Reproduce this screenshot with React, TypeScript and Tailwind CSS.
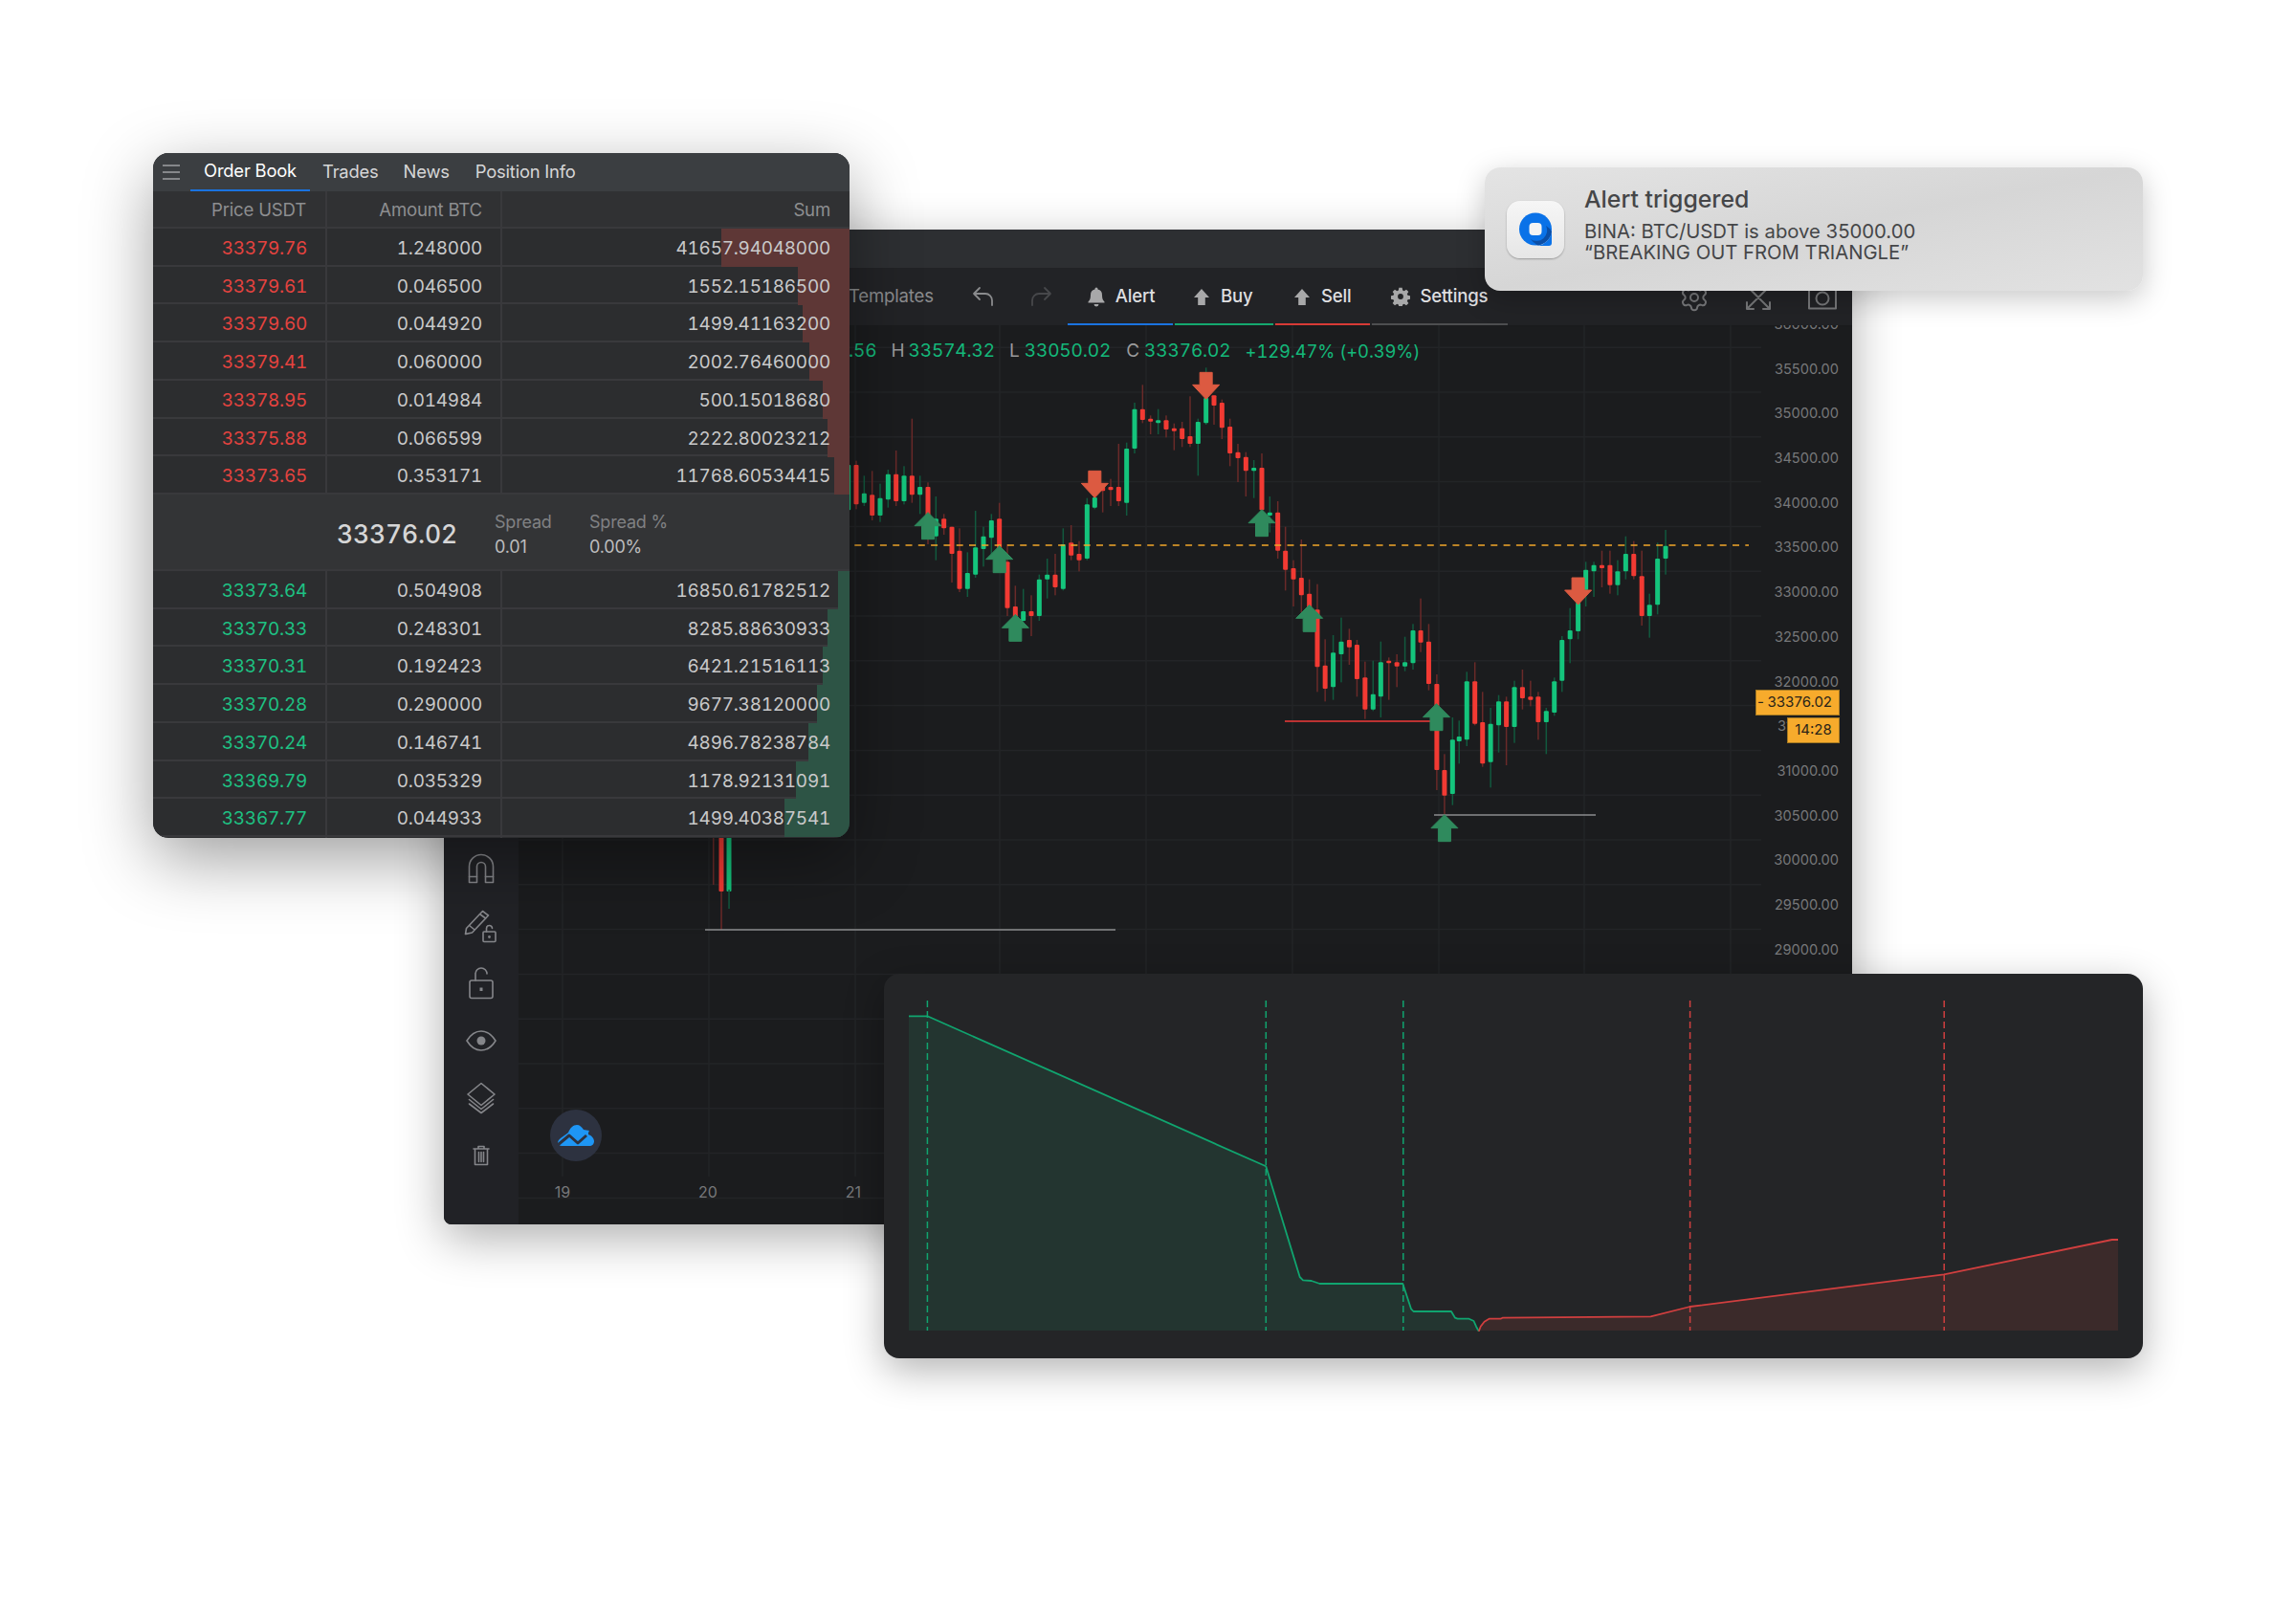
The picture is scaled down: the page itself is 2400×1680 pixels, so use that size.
import React from "react";
import { Settings } from "lucide-react";

type C = [number, "R" | "G", number, number, number, number];
// x (crop 1), colour, wick top, body top, body bottom, wick bottom
const A: C[] = [
  [20,"G",335,348,490,500],[45,"R",335,348,472,487],[70,"G",382,437,467,477],[95,"R",367,442,507,522],[120,"G",407,452,507,527],
  [145,"G",363,377,457,482],[170,"R",303,377,462,477],[195,"G",352,382,462,472],[220,"R",203,382,442,467],[245,"G",382,417,442,502],
  [270,"R",403,417,507,597],[295,"G",447,517,572,647],[320,"R",502,517,547,567],[345,"R",542,542,627,717],[369,"R",547,617,737,747],
  [394,"G",622,687,737,762],[419,"G",492,607,692,702],[444,"G",542,572,612,667],[469,"G",502,522,577,627],[494,"R",467,517,650,650],
  [519,"R",597,652,797,822],[544,"R",727,792,830,830],[569,"G",737,807,837,850],[594,"R",757,807,822,885],[619,"G",692,707,822,837],
  [644,"G",642,692,707,767],[669,"R",627,692,732,757],[694,"G",547,597,737,742],[719,"R",537,592,632,647],[744,"R",587,627,647,682],
  [769,"G",452,472,642,647],[793,"G",450,450,482,487],[818,"R",407,410,430,497],[843,"R",392,417,427,477],[868,"R",282,417,462,477],
  [893,"G",278,297,467,507],[918,"G",153,173,297,312],[943,"R",97,173,207,217],[968,"R",193,203,212,252],[992,"G",173,208,217,252],
  [1017,"R",193,208,237,262],[1042,"R",218,233,242,302],[1067,"R",213,233,267,292],[1092,"R",133,258,282,292],[1117,"G",203,213,282,382],
  [1142,"G",43,138,217,222],[1167,"R",130,130,162,222],[1192,"R",143,153,232,267],[1217,"R",203,228,312,352],[1242,"R",282,308,327,402],
  [1267,"R",308,323,367,447],[1292,"G",333,357,367,452],[1317,"R",312,357,490,500],[1342,"G",447,497,507,560],[1367,"R",462,497,617,642],
  [1391,"R",542,617,677,742],[1416,"R",647,672,707,792],[1441,"R",582,702,757,812],[1466,"R",707,752,800,800],[1491,"R",722,802,982,1060],
];
const B: C[] = [
  [118,"R",895,977,1050,1090],[140,"G",882,937,1045,1085],[162,"G",827,902,942,1030],[184,"R",862,897,920,975],[205,"R",897,912,1020,1075],
  [227,"R",965,1015,1115,1145],[249,"G",962,1067,1115,1120],[270,"G",902,967,1075,1140],[292,"R",952,962,970,1085],[314,"R",942,967,980,1045],
  [336,"G",887,967,980,995],[358,"G",847,867,970,990],[379,"R",767,867,905,935],[401,"R",847,902,1035,1055],[423,"R",1005,1035,1305,1368],
  [444,"R",1255,1305,1385,1445],[466,"G",1140,1210,1380,1415],[484,"G",1150,1200,1215,1285],[505,"G",997,1027,1210,1230],[527,"R",967,1027,1160,1165],
  [548,"R",1060,1155,1285,1295],[570,"G",1110,1160,1280,1360],[592,"G",1070,1090,1165,1250],[613,"R",1075,1090,1170,1290],[635,"G",1025,1045,1170,1220],
  [657,"R",990,1045,1080,1115],[679,"R",1025,1075,1085,1105],[700,"R",1060,1075,1155,1210],[722,"G",1110,1120,1155,1255],[744,"G",1015,1027,1125,1135],
  [765,"G",885,897,1025,1060],[787,"G",797,867,895,970],[809,"G",780,780,870,895],[830,"G",652,677,740,792],[852,"G",652,662,682,762],
  [874,"R",617,662,672,732],[896,"R",617,662,725,752],[917,"G",647,682,725,757],[939,"G",572,627,682,707],[961,"R",587,627,697,707],
  [983,"R",617,697,822,852],[1004,"G",752,787,822,890],[1026,"G",592,642,787,817],[1048,"G",552,602,642,692],
];
const ax = (v: number) => 880 + v / 3;
const bx = (v: number) => 1340 + v / 2.613;
const ay = (v: number) => 370 + v / 3;

const candles = [...A.map((c) => ({ x: ax(c[0]), c })), ...B.map((c) => ({ x: bx(c[0]), c }))];

const ups = [[ax(270), 497], [ax(494), 602], [ax(544), 817], [ax(1317), 488], [ax(1466), 787], [bx(422), 1097], [bx(444), 1445]];
const downs = [[ax(793), 367], [ax(1142), 58], [bx(809), 702]];

const asks = [
  ["33379.76", "1.248000", "41657.94048000", 134],
  ["33379.61", "0.046500", "1552.15186500", 54],
  ["33379.60", "0.044920", "1499.41163200", 49],
  ["33379.41", "0.060000", "2002.76460000", 42],
  ["33378.95", "0.014984", "500.15018680", 28],
  ["33375.88", "0.066599", "2222.80023212", 23],
  ["33373.65", "0.353171", "11768.60534415", 16],
] as const;
const bids = [
  ["33373.64", "0.504908", "16850.61782512", 12],
  ["33370.33", "0.248301", "8285.88630933", 23],
  ["33370.31", "0.192423", "6421.21516113", 28],
  ["33370.28", "0.290000", "9677.38120000", 34],
  ["33370.24", "0.146741", "4896.78238784", 43],
  ["33369.79", "0.035329", "1178.92131091", 56],
  ["33367.77", "0.044933", "1499.40387541", 68],
] as const;

const prices = ["36000.00","35500.00","35000.00","34500.00","34000.00","33500.00","33000.00","32500.00","32000.00","31500.00","31000.00","30500.00","30000.00","29500.00","29000.00"];

function Row({ r, ask }: { r: readonly [string, string, string, number]; ask: boolean }) {
  return (
    <div className="grid h-[39.72px] grid-cols-[182px_183px_1fr] items-stretch border-b-[2px] border-[#39393c] bg-[#2c2d2f] text-[18.9px] leading-[41px] tracking-[-0.2px] text-[#c9c9ca] tabular-nums">
      <div className={`border-r-[2px] border-[#39393c] pr-[19px] text-right ${ask ? "text-[#e5433f]" : "text-[#1ec183]"}`}>{r[0]}</div>
      <div className="border-r-[2px] border-[#39393c] pr-[19px] text-right">{r[1]}</div>
      <div className="relative pr-[20px] text-right">
        <div className={`absolute top-0 right-0 h-[40px] ${ask ? "bg-[#5e3736]" : "bg-[#2d5445]"}`} style={{ width: r[3] }} />
        <span className="relative">{r[2]}</span>
      </div>
    </div>
  );
}

function OrderBook() {
  return (
    <div className="absolute top-[160px] left-[160px] z-20 flex h-[716px] w-[728px] flex-col overflow-hidden rounded-[16px] bg-[#2c2d2f] shadow-[0_22px_70px_rgba(0,0,0,0.38)]">
      <div className="flex h-[40px] items-center bg-[#3b3e41] text-[18.4px] tracking-[-0.2px] text-[#d6d6d7]">
        <div className="ml-[10px] flex w-[18px] flex-col gap-[5px]">
          <div className="h-[2px] bg-[#85878a]" />
          <div className="h-[2px] bg-[#85878a]" />
          <div className="h-[2px] bg-[#85878a]" />
        </div>
        <div className="ml-[11px] flex h-full w-[125px] items-center justify-center border-b-[2px] border-[#1a73e0] text-white">Order Book</div>
        <div className="ml-[13px]">Trades</div>
        <div className="ml-[26px]">News</div>
        <div className="ml-[27px]">Position Info</div>
      </div>
      <div className="grid h-[39px] grid-cols-[182px_183px_1fr] border-b-[2px] border-[#39393c] bg-[#303133] text-[18.6px] leading-[39px] tracking-[-0.2px] text-[#8d8e90]">
        <div className="border-r-[2px] border-[#39393c] pr-[20px] text-right">Price USDT</div>
        <div className="border-r-[2px] border-[#39393c] pr-[19px] text-right">Amount BTC</div>
        <div className="pr-[20px] text-right">Sum</div>
      </div>
      {asks.map((r) => <Row key={r[0]} r={r} ask />)}
      <div className="flex h-[80px] items-center border-b-[2px] border-[#39393c] bg-[#333436] pt-[5px]">
        <div className="ml-[192px] w-[165px] text-[26.4px] font-medium tracking-[-0.1px] text-[#d6d6d7] tabular-nums">33376.02</div>
        <div className="w-[99px] text-[18px] leading-[26px] tracking-[-0.2px]">
          <div className="text-[#808183]">Spread</div>
          <div className="text-[#bdbdbe]">0.01</div>
        </div>
        <div className="text-[18px] leading-[26px] tracking-[-0.2px]">
          <div className="text-[#808183]">Spread %</div>
          <div className="text-[#bdbdbe]">0.00%</div>
        </div>
      </div>
      {bids.map((r) => <Row key={r[0]} r={r} ask={false} />)}
    </div>
  );
}

function Arrow({ x, y, up }: { x: number; y: number; up: boolean }) {
  const fill = up ? "#2f8a5d" : "#dc5a41";
  const pts = up
    ? `${x},${y} ${x + 14},${y + 14} ${x + 6.5},${y + 14} ${x + 6.5},${y + 28} ${x - 6.5},${y + 28} ${x - 6.5},${y + 14} ${x - 14},${y + 14}`
    : `${x - 6.5},${y} ${x + 6.5},${y} ${x + 6.5},${y + 13} ${x + 14},${y + 13} ${x},${y + 28} ${x - 14},${y + 13} ${x - 6.5},${y + 13}`;
  return <polygon points={pts} fill={fill} stroke={fill} strokeWidth="1" strokeLinejoin="round" />;
}

function ChartDrawing() {
  const h: number[] = [];
  for (let k = -1; k < 19; k++) h.push(410 + 46.8 * k);
  const v: number[] = [588, 741, 894, 1045, 1198, 1351, 1504, 1656, 1809];
  return (
    <svg viewBox="542 340 1394 940" className="absolute inset-0 h-full w-full">
      {h.map((y) => <line key={y} x1="542" x2="1841" y1={y} y2={y} stroke="#232427" strokeWidth="1.5" />)}
      {v.map((x) => <line key={x} x1={x} x2={x} y1="340" y2="1230" stroke="#232427" strokeWidth="1.5" />)}
      {candles.map(({ x, c }, i) => {
        const col = c[1] === "R";
        return (
          <g key={i}>
            <rect x={x - 0.75} y={ay(c[2])} width="1.5" height={(c[5] - c[2]) / 3} fill={col ? "#6a2a29" : "#12593e"} />
            <rect x={x - 2.5} y={ay(c[3])} width="5" height={(c[4] - c[3]) / 3} rx="1" fill={col ? "#f23a33" : "#14c47c"} />
          </g>
        );
      })}
      <rect x="745" y="870" width="1.5" height="55" fill="#6a2a29" />
      <rect x="753.3" y="920" width="1.5" height="52" fill="#6a2a29" />
      <rect x="751.5" y="870" width="5" height="62" rx="1" fill="#f23a33" />
      <rect x="759.5" y="870" width="5" height="62" rx="1" fill="#14c47c" />
      <rect x="761.3" y="930" width="1.5" height="20" fill="#12593e" />
      <line x1="880" x2="1828" y1="570" y2="570" stroke="#f2a62a" strokeWidth="1.5" strokeDasharray="7 6.3" />
      <line x1="1343" x2="1495" y1="754" y2="754" stroke="#f23a3a" strokeWidth="1.5" />
      <line x1="1499" x2="1668" y1="852" y2="852" stroke="#8c8d8f" strokeWidth="1.5" />
      <line x1="737" x2="1166" y1="972" y2="972" stroke="#8c8d8f" strokeWidth="1.5" />
      {ups.map(([x, y]) => <Arrow key={x} x={x} y={ay(y)} up />)}
      {downs.map(([x, y]) => <Arrow key={x} x={x} y={ay(y)} up={false} />)}
    </svg>
  );
}

const stroke = { fill: "none", stroke: "#85868a", strokeWidth: 1.6, strokeLinecap: "round", strokeLinejoin: "round" } as const;

function Slot({ children }: { children: React.ReactNode }) {
  return <div className="flex h-[60px] w-full items-center justify-center">{children}</div>;
}

function SideIcons() {
  return (
    <div className="flex h-full w-[78px] flex-col items-center bg-[#212226] pt-[538px]">
      <Slot>
        <svg width="28" height="32" viewBox="0 0 28 32" {...stroke}>
          <path d="M1.5 30.5V14a12.500 12.500 0 0 1 25 0v16.500h-8V14a4.500 4.500 0 0 0-9 0v16.500z" />
          <path d="M1.5 24.5h8M18.500 24.500h8" />
        </svg>
      </Slot>
      <Slot>
        <svg width="36" height="36" viewBox="0 0 36 36" {...stroke}>
          <path d="M1.500 26.500l1-6L19.500 2.500l6 4.500L8.500 25z M2 26.500l6.500-1.500M16.500 5.500l6 4.500M5.500 17.500l5 4" />
          <rect x="20" y="24" width="13" height="10.500" rx="1" />
          <path d="M23.500 24v-3.500a3 3 0 0 1 6 0" />
          <circle cx="26.500" cy="29.500" r="0.600" />
        </svg>
      </Slot>
      <Slot>
        <svg width="26" height="34" viewBox="0 0 26 34" {...stroke}>
          <rect x="1" y="14" width="24" height="18.500" rx="2" />
          <path d="M7 14V7a6 6 0 0 1 12 0" />
          <path d="M13 21.500v3.500" strokeWidth="3" strokeLinecap="butt" />
        </svg>
      </Slot>
      <Slot>
        <svg width="32" height="24" viewBox="0 0 32 24" {...stroke}>
          <path d="M1 12c4-6.500 9-10 15-10s11 3.500 15 10c-4 6.500-9 10-15 10S5 18.500 1 12z" />
          <circle cx="16" cy="12" r="4.500" fill="#85868a" stroke="none" />
        </svg>
      </Slot>
      <Slot>
        <svg width="30" height="34" viewBox="0 0 30 34" {...stroke}>
          <path d="M15 1.500L29 13 15 24.500 1 13z" />
          <path d="M2.500 18.500L15 28.500 27.500 18.500M2.500 23L15 32.500 27.500 23" />
        </svg>
      </Slot>
      <Slot>
        <svg width="18" height="22" viewBox="0 0 18 22" {...stroke}>
          <path d="M1 4h16M6 4V1.500h6V4M2.500 4v16.500h13V4M6.500 7.500v10M9 7.500v10M11.500 7.500v10" />
        </svg>
      </Slot>
    </div>
  );
}

function ChartWindow() {
  return (
    <div className="absolute top-[240px] left-[464px] z-10 flex h-[1040px] w-[1472px] flex-col overflow-hidden rounded-b-[8px] bg-[#1b1c1e] shadow-[0_14px_50px_rgba(0,0,0,0.32)]">
      <div className="h-[40px] bg-[#2d2f32]" />
      <div className="relative flex h-[60px] items-center bg-[#222326] text-[18.6px] tracking-[-0.2px] text-[#dfdfe0]">
        <span className="ml-[423px] text-[#8a8b8d]">Templates</span>
        <svg width="24" height="22" viewBox="0 0 24 22" className="ml-[40px]" fill="none" stroke="#8a8b8d" strokeWidth="1.8" strokeLinecap="round" strokeLinejoin="round">
          <path d="M8 2L2 8l6 6M2 8h12a7 7 0 0 1 7 7v5" />
        </svg>
        <svg width="24" height="22" viewBox="0 0 24 22" className="ml-[36px]" fill="none" stroke="#47484b" strokeWidth="1.8" strokeLinecap="round" strokeLinejoin="round">
          <path d="M16 2l6 6-6 6M22 8H10a7 7 0 0 0-7 7v5" />
        </svg>
        <svg width="18" height="21" viewBox="0 0 18 21" className="ml-[37px]" fill="#a8a8a9">
          <path d="M9 0.500a1.500 1.500 0 0 1 1.500 1.500v.5A6 6 0 0 1 15 8.500c0 4 1 5.500 2.500 7v1H.5v-1C2 14 3 12.500 3 8.500a6 6 0 0 1 4.500-6V2A1.500 1.500 0 0 1 9 .5z" />
          <path d="M6.500 18h5a2.500 2.500 0 0 1-5 0z" />
        </svg>
        <span className="ml-[11px] font-medium">Alert</span>
        <svg width="16" height="17" viewBox="0 0 16 17" className="ml-[40.5px]" fill="#a8a8a9"><path d="M8 0l8 9h-4.200v8H4.200V9H0z" /></svg>
        <span className="ml-[12px] font-medium">Buy</span>
        <svg width="16" height="17" viewBox="0 0 16 17" className="ml-[43.5px]" fill="#a8a8a9"><path d="M8 0l8 9h-4.200v8H4.200V9H0z" /></svg>
        <span className="ml-[12px] font-medium">Sell</span>
        <svg width="20" height="20" viewBox="0 0 24 24" className="ml-[42px]" fill="#a8a8a9">
          <path fillRule="evenodd" d="M10 1h4l.6 3.200 1.900.8 2.700-1.800 2.800 2.800-1.800 2.700.8 1.900 3 .6v4l-3 .6-.8 1.900 1.800 2.700-2.800 2.800-2.700-1.800-1.900.8-.6 3h-4l-.6-3-1.900-.8-2.700 1.800-2.800-2.800 1.800-2.700-.8-1.900-3-.6v-4l3-.6.8-1.900L2 6l2.800-2.800 2.700 1.800 1.900-.8zM12 8.500a3.500 3.500 0 1 0 0 7 3.500 3.500 0 0 0 0-7z" />
        </svg>
        <span className="ml-[10px] font-medium">Settings</span>
        <Settings size={32} strokeWidth={1.5} color="#77787a" className="absolute top-[15px] left-[1291px]" />
        <svg width="30" height="30" viewBox="0 0 30 30" className="absolute top-[16px] left-[1359px]" fill="none" stroke="#77787a" strokeWidth="2" strokeLinecap="round" strokeLinejoin="round">
          <path d="M3 3l24 24M27 3L3 27M3 27h7M3 27v-7M27 27h-7M27 27v-7" />
        </svg>
        <svg width="30" height="30" viewBox="0 0 30 30" className="absolute top-[15px] left-[1426px]" fill="none" stroke="#77787a" strokeWidth="2" strokeLinejoin="round">
          <path d="M1 5.500h28v22H1z" />
          <circle cx="15" cy="17" r="6.500" />
        </svg>
        <div className="absolute bottom-0 left-[652px] h-[2px] w-[110px] bg-[#1a73e0]" />
        <div className="absolute bottom-0 left-[764px] h-[2px] w-[103px] bg-[#14a86e]" />
        <div className="absolute bottom-0 left-[869px] h-[2px] w-[99px] bg-[#d73a36]" />
        <div className="absolute bottom-0 left-[970px] h-[2px] w-[142px] bg-[#4d4e50]" />
      </div>
      <div className="flex min-h-0 flex-1">
        <SideIcons />
        <div className="relative flex-1 overflow-hidden">
          <ChartDrawing />
          <div className="absolute top-[14px] left-[345px] flex items-center whitespace-nowrap text-[19px] leading-[26px] tracking-[-0.1px] text-[#14b87a] tabular-nums">
            <span>.56</span>
            <span className="ml-[15px] text-[#9a9a9b]">H</span><span className="ml-[4px]">33574.32</span>
            <span className="ml-[15px] text-[#9a9a9b]">L</span><span className="ml-[5px]">33050.02</span>
            <span className="ml-[16px] text-[#9a9a9b]">C</span><span className="ml-[5px]">33376.02</span>
            <span className="ml-[15px] text-[18.4px]">+129.47% (+0.39%)</span>
          </div>
          <div className="absolute top-[-24px] right-[14px] flex flex-col text-right text-[14.6px] leading-[46.7px] text-[#77787a]">
            {prices.map((p) => <div key={p} className="h-[46.7px]">{p}</div>)}
          </div>
          <div className="absolute top-[381px] left-[1293px] flex h-[27px] w-[88px] items-center justify-between border border-[#a67a22] bg-[#f7ab2c] pr-[7px] pl-[1px] text-[15px] text-[#2a2418]">
            <span>-</span><span>33376.02</span>
          </div>
          <div className="absolute top-[410px] left-[1326px] flex h-[27px] w-[55px] items-center justify-center border border-[#a67a22] bg-[#f7ab2c] text-[15px] text-[#2a2418]">14:28</div>
          <div className="absolute top-[896px] left-[-30px] flex text-center text-[16px] leading-[20px] text-[#77787a]">
            <span className="w-[152px]">19</span>
            <span className="w-[152px]">20</span>
            <span className="w-[152px]">21</span>
          </div>
          <div className="absolute top-[820px] left-[33px] flex h-[54px] w-[54px] items-center justify-center rounded-full bg-[#2d3240]">
            <svg width="40" height="24" viewBox="0 0 40 24" fill="#1e96f5">
              <path d="M2 17c2-3 7-5 10-8 2-5 5-8 9-8 3 0 5 2 7 5l6 1c-1 1-1 3-1 4 3 1 6 4 6 7 0 3-2 5-5 5H5c-3 0-5-3-3-6z" />
              <path d="M1 22l12-10 9 8 9-8" fill="none" stroke="#2d3240" strokeWidth="3" strokeLinejoin="round" />
            </svg>
          </div>
        </div>
      </div>
    </div>
  );
}

function Notification() {
  return (
    <div className="absolute top-[175px] left-[1552px] z-30 flex h-[129px] w-[688px] items-center rounded-[16px] bg-gradient-to-br from-[#e4e4e4] via-[#d6d6d6] to-[#e2e2e2] shadow-[0_8px_30px_rgba(0,0,0,0.22)]">
      <div className="ml-[23px] flex h-[60px] w-[60px] items-center justify-center rounded-[14px] bg-gradient-to-b from-[#f6f6f6] to-[#e6e6e6] shadow-[0_1px_2px_rgba(0,0,0,0.3)]">
        <svg width="34" height="36" viewBox="0 0 34 36">
          <circle cx="17" cy="17.500" r="17" fill="#0a72e8" />
          <path d="M34 17.500V32a3 3 0 0 1-3 3H17a17 17 0 0 0 17-17.500z" fill="#0a72e8" />
          <path d="M12 28a11 11 0 0 0 16-14A17 17 0 0 1 34 20 17 17 0 0 1 20 34.500 17 17 0 0 1 12 28z" fill="#0b4ea6" />
          <rect x="10.500" y="11" width="13" height="13" rx="4" fill="#f4f4f4" />
        </svg>
      </div>
      <div className="-mt-[12px] ml-[21px] text-[#454648]">
        <div className="text-[24.800px] leading-[30px] font-medium">Alert triggered</div>
        <div className="mt-[8px] text-[20.300px] leading-[22px]">BINA: BTC/USDT is above 35000.00</div>
        <div className="text-[20.300px] leading-[22px]">“BREAKING OUT FROM TRIANGLE”</div>
      </div>
    </div>
  );
}

function DepthChart() {
  const green: [number, number][] = [[950,1062.3],[969.4,1062.3],[1323.3,1219.3],[1358.7,1335],[1362,1338.3],[1370.8,1339],[1379.5,1342],[1466.3,1342],[1475,1368.3],[1477.5,1371],[1517,1371],[1521,1377.7],[1523.5,1378.7],[1535.6,1378.7],[1540.5,1381],[1543,1386.7],[1545.8,1391.7]];
  const red: [number, number][] = [[1545.8,1391.7],[1547.7,1386.7],[1551.6,1381.7],[1556.5,1378.7],[1568.6,1378.7],[1570.5,1377.7],[1725.4,1376.3],[1766.6,1366],[2032,1332.3],[2207.7,1296],[2214,1296]];
  const s = (p: [number, number][]) => p.map(([x, y]) => `${x},${y}`).join(" ");
  return (
    <div className="absolute top-[1018px] left-[924px] z-20 h-[402px] w-[1316px] rounded-[16px] bg-[#242527] shadow-[0_12px_40px_rgba(0,0,0,0.3)]">
      <svg viewBox="924 1018 1316 402" className="h-full w-full">
        <polygon points={`${s(green)} 1545.8,1391 950,1391`} fill="#233530" />
        <polygon points={`${s(red)} 2214,1391 1545.8,1391`} fill="#3b2a2a" />
        {[969.4, 1323.3, 1466.8].map((x) => <line key={x} x1={x} x2={x} y1="1046" y2="1391" stroke="#10a56f" strokeWidth="1.5" strokeDasharray="7 4" />)}
        {[1766.6, 2032.2].map((x) => <line key={x} x1={x} x2={x} y1="1046" y2="1391" stroke="#d13f3f" strokeWidth="1.5" strokeDasharray="7 4" />)}
        <polyline points={s(green)} fill="none" stroke="#10a56f" strokeWidth="1.8" strokeLinejoin="round" />
        <polyline points={s(red)} fill="none" stroke="#d13f3f" strokeWidth="1.8" strokeLinejoin="round" />
      </svg>
    </div>
  );
}

export default function App() {
  return (
    <div className="relative h-[1680px] w-[2400px] overflow-hidden bg-white font-['Inter',sans-serif]">
      <ChartWindow />
      <DepthChart />
      <OrderBook />
      <Notification />
    </div>
  );
}
